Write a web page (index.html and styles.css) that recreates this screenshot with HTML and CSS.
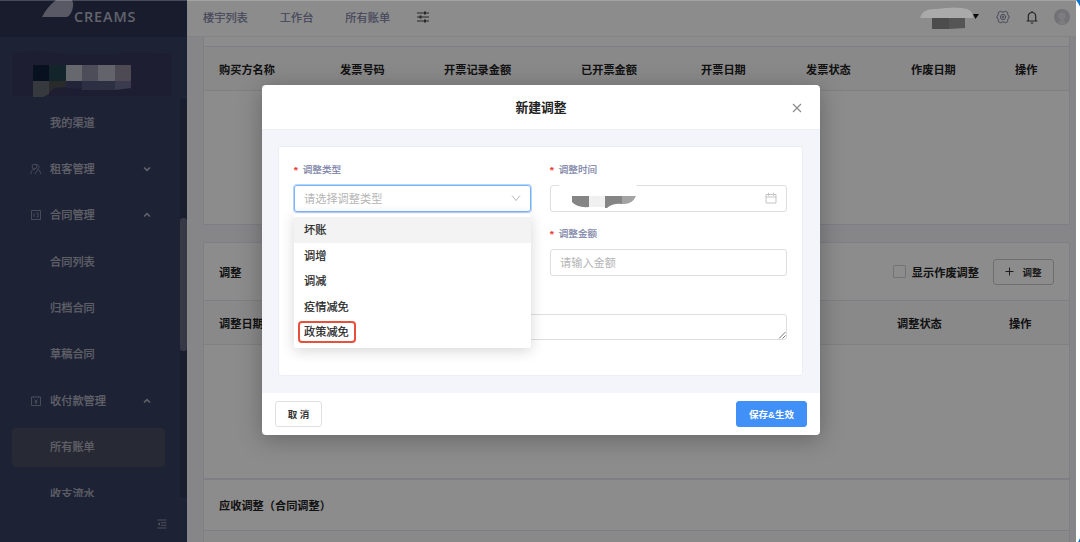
FILE: index.html
```html
<!DOCTYPE html>
<html lang="zh-CN">
<head>
  <meta charset="UTF-8">
  <title>CREAMS</title>
  <link rel="stylesheet" href="styles.css">
</head>
<body>
  <div class="app">
    <aside class="sidebar">
      <div class="brand">
        <svg class="brand-mark" width="32" height="20" viewBox="0 0 32 20"><path d="M0 17Q5 7 14 0H30Q32 3 30.500 9Q29 15 25 17Z" fill="#a0a3b6"/></svg>
        <span>CREAMS</span>
      </div>
      <div class="account">
        <svg width="162" height="52" viewBox="0 0 162 52">
          <path d="M2 5Q25 1 50 5Q92 8 110 5Q130 3 148 5H162V48H2V26Z" fill="#36385b"/>
          <path d="M23 17h16v16H23z" fill="#0e2039"/>
          <path d="M39 17h17v16H39z" fill="#25424f"/>
          <path d="M56 17h16v16H56z" fill="#bcbec8"/>
          <path d="M72 17h16v16H72z" fill="#8c8da3"/>
          <path d="M88 17h17v16H88z" fill="#b4b5c3"/>
          <path d="M105 17h16v16H105z" fill="#8d8799"/>
          <path d="M23 33h16v13l-6 3H23z" fill="#636a74"/>
          <path d="M39 33h17v6l-12 1l-5 5z" fill="#494f4c"/>
          <path d="M56 33h16v8l-16 -1z" fill="#3f426b"/>
          <path d="M72 33h33v9l-33 0z" fill="#535679"/>
          <path d="M105 33h16v7l-16 2z" fill="#6b6c8e"/>
        </svg>
      </div>
      <nav class="menu">
        <a class="menu-item">我的渠道</a>
        <a class="menu-item group">
          <svg class="menu-icon" viewBox="0 0 12 12"><circle cx="4.5" cy="3.5" r="2.4"/><path d="M1 11C1 7 3 6 5 6.500M6 1.500c3-.3 4 3 1.800 5M5 11L7.800 6.500c1.500.500 2.700 2 2.700 4.500"/></svg>
          租客管理
          <svg class="arrow" viewBox="0 0 8 6"><path d="M1 1.500L4 4.300L7 1.500"/></svg>
        </a>
        <a class="menu-item group">
          <svg class="menu-icon" viewBox="0 0 12 12"><path d="M1.500 1.500h9v9h-9zM4 4v4M6.500 4h1.500v4H6.500"/></svg>
          合同管理
          <svg class="arrow" viewBox="0 0 8 6"><path d="M1 4.500L4 1.700L7 4.500"/></svg>
        </a>
        <a class="menu-item">合同列表</a>
        <a class="menu-item">归档合同</a>
        <a class="menu-item">草稿合同</a>
        <a class="menu-item group">
          <svg class="menu-icon" viewBox="0 0 12 12"><path d="M1.500 2h9v8.500h-9zM3.500 1v1.500M8.500 1v1.500M4.500 4.500L6 6L7.500 4.500M6 6v3M4.500 7h3"/></svg>
          收付款管理
          <svg class="arrow" viewBox="0 0 8 6"><path d="M1 4.500L4 1.700L7 4.500"/></svg>
        </a>
        <a class="menu-item active">所有账单</a>
        <a class="menu-item">收支流水</a>
        <div class="scrollbar"><div class="thumb"></div></div>
      </nav>
      <div class="collapse">
        <svg width="10" height="10" viewBox="0 0 10 10"><path d="M.5 1h9M4 3.700h5.500M4 6.300h5.500M.5 9h9" stroke="#8f92a5" fill="none"/><path d="M.5 5L3 3.300v3.400z" fill="#8f92a5"/></svg>
      </div>
    </aside>

    <div class="main">
      <header class="topbar">
        <a>楼宇列表</a>
        <a>工作台</a>
        <a>所有账单</a>
        <svg class="sliders" width="12" height="12" viewBox="0 0 12 12"><path d="M0 2h12M0 6h12M0 10h12" stroke="#4a4a4e" fill="none" stroke-width="1.100"/><path d="M7 .6h2v2.800H7zM2.500 4.600h2v2.800h-2zM7 8.600h2v2.800H7z" fill="#4a4a4e"/></svg>
        <div class="tools">
          <svg class="username" width="60" height="24" viewBox="0 0 60 24"><path d="M0 13Q2 3 17 4Q36 1 47 4Q53 6 53 13Z" fill="#aaa"/><path d="M12 13h17v11H12z" fill="#4c4c4c"/><path d="M29 13h16v10l-16 1z" fill="#555"/><path d="M53 9h6l-3.500 5z" fill="#0a0a0a"/></svg>
          <svg class="gear" width="14" height="14" viewBox="0 0 14 14"><path d="M4.300 1.200L6 2h2l1.700-.8 2 1.300v2L13.300 7l-1.600 2.500v2l-2 1.300L8 12H6l-1.700.8-2-1.300v-2L.7 7l1.600-2.500v-2z"/><path d="M5.600 4.600h2.800L9.800 7 8.400 9.400H5.600L4.200 7z"/><circle cx="7" cy="7" r=".8"/></svg>
          <svg class="bell" width="12" height="14" viewBox="0 0 12 14"><path d="M.5 11h11M2.300 11V6.500C2.300 4 3.800 2.500 6 2.500S9.700 4 9.700 6.500V11M6 1v1.500M4.700 13h2.600"/></svg>
          <svg class="avatar" width="16" height="16" viewBox="0 0 16 16"><circle cx="8" cy="8" r="8" fill="#d0d0da"/><circle cx="8" cy="7" r="3.600" fill="#e4e4ea"/><path d="M6.500 9h3v3l3 1.500Q8 17 3.500 13.500l3-1.500z" fill="#e4e4ea"/></svg>
        </div>
      </header>

      <section class="card invoices">
        <div class="row head invoice-cols">
          <span>购买方名称</span><span>发票号码</span><span>开票记录金额</span><span>已开票金额</span><span>开票日期</span><span>发票状态</span><span>作废日期</span><span>操作</span>
        </div>
      </section>

      <section class="card adjusts">
        <div class="title">
          <b>调整</b>
          <label><i class="checkbox"></i>显示作废调整</label>
          <button class="btn add"><svg width="9" height="9" viewBox="0 0 9 9"><path d="M4.500 .5v8M.5 4.500h8" stroke="#333" fill="none"/></svg>调整</button>
        </div>
        <div class="row head adjust-cols">
          <span>调整日期</span><span>调整状态</span><span>操作</span>
        </div>
      </section>

      <section class="card receivable">
        <div class="title"><b>应收调整（合同调整）</b></div>
        <div class="row head"></div>
      </section>
    </div>
  </div>

  <div class="edge">
    <svg width="6" height="12" viewBox="0 0 6 12"><path d="M0 0H6V12Q4 5 0 0Z" fill="#0b74d1"/></svg>
    <svg width="6" height="12" viewBox="0 0 6 12"><path d="M6 0V12H2Q5 7 6 0Z" fill="#0b74d1"/></svg>
  </div>
  <div class="mask"></div>

  <div class="modal">
    <div class="modal-header">
      新建调整
      <svg class="close" width="10" height="10" viewBox="0 0 10 10"><path d="M1 1l8 8M9 1L1 9" stroke="#8c8c8c" stroke-width="1.200" fill="none"/></svg>
    </div>
    <div class="modal-body">
      <div class="form">
        <div class="field">
          <label class="required">调整类型</label>
          <div class="input focus">请选择调整类型
            <svg class="suffix" width="10" height="10" viewBox="0 0 10 10"><path d="M1 2.500l4 5 4-5" stroke="#b8b8b8" fill="none"/></svg>
          </div>
          <ul class="dropdown">
            <li class="hover">坏账</li>
            <li>调增</li>
            <li>调减</li>
            <li>疫情减免</li>
            <li><span class="marked">政策减免</span></li>
          </ul>
        </div>
        <div class="field">
          <label class="required">调整时间</label>
          <div class="input">
            <svg class="smear" width="82" height="26" viewBox="0 0 82 26"><path d="M0 0h74q6 2 8 5H0z" fill="#fff"/><path d="M13 12h17v11q-12 1-17-5z" fill="#858585"/><path d="M30 12h16v11H30z" fill="#f0f0f0"/><path d="M46 12h17v8q-9-1-15 4h-2z" fill="#858585"/><path d="M63 12h14q-4 9-14 8z" fill="#a3a3a3"/></svg>
            <svg class="suffix" width="12" height="12" viewBox="0 0 12 12"><path d="M1 2.500h10v8.500H1zM1 5h10M3.500 .8v3M8.500 .8v3" stroke="#c4c4c4" fill="none"/></svg>
          </div>
        </div>
        <div class="field amount">
          <label class="required">调整金额</label>
          <div class="input">请输入金额</div>
        </div>
        <div class="input remark">
          <svg class="grip" width="8" height="8" viewBox="0 0 8 8"><path d="M1 7.500L7.500 1M4.500 7.500l3-3" stroke="#777" fill="none"/></svg>
        </div>
      </div>
    </div>
    <div class="modal-footer">
      <button class="btn cancel">取 消</button>
      <button class="btn primary">保存&amp;生效</button>
    </div>
  </div>
</body>
</html>
```
FILE: styles.css
```css
* {
  box-sizing: border-box;
}

body {
  margin: 0;
  width: 1080px;
  height: 542px;
  overflow: hidden;
  position: relative;
  font-family: "Liberation Sans", "Noto Sans CJK SC", sans-serif;
  font-size: 11.2px;
  color: #222;
  background: #fff;
}

.app {
  display: flex;
  width: 1076px;
  height: 542px;
  background: #f4f5f9;
}

/* sidebar */
.sidebar {
  width: 187px;
  display: flex;
  flex-direction: column;
  background: #373e62;
  color: #b3b5c0;
}

.brand {
  flex: none;
  height: 37px;
  display: flex;
  background: #2c3352;
  padding-left: 42px;
  font-family: "Open Sans", sans-serif;
  font-size: 14.4px;
  font-weight: 600;
  letter-spacing: 0.9px;
  line-height: 33px;
  color: #b4b7c4;
}

.account {
  flex: none;
  height: 62px;
  padding: 11px 0 0 10px;
}

.account svg,
.tools svg {
  display: block;
}

.menu {
  position: relative;
  flex: none;
  height: 398px;
  overflow: hidden;
}

.menu-item {
  display: flex;
  align-items: center;
  height: 39px;
  margin: 0 22px 7.4px 12px;
  padding-left: 38px;
  border-radius: 4px;
  line-height: 20px;
  -webkit-text-stroke: 0.25px;
}

.menu-item:first-child {
  margin-top: 4px;
}

.group {
  padding-left: 18px;
}

.menu-icon {
  width: 12px;
  height: 12px;
  margin-right: 8px;
  fill: none;
  stroke: #8d91a6;
  stroke-width: 0.9;
}

.arrow {
  width: 8px;
  height: 6px;
  margin: 0 14px 0 auto;
  fill: none;
  stroke: #b3b5c0;
  stroke-width: 1.6;
}

.active {
  background: #484b5f;
}

.scrollbar {
  position: absolute;
  top: -4px;
  right: 0;
  width: 7px;
  height: 402px;
  padding-top: 123px;
  background: #303655;
}

.thumb {
  height: 133px;
  border-radius: 3px;
  background: #63677e;
}

.collapse {
  padding: 22px 0 0 157px;
}

/* top bar */
.main {
  flex: 1;
  display: flex;
  flex-direction: column;
}

.topbar {
  flex: none;
  display: flex;
  align-items: center;
  height: 37px;
  padding: 0 6px 3px 16px;
  background: #fff;
  color: #7d82a5;
  border-bottom: 1px solid #eeeff4;
  -webkit-text-stroke: 0.2px;
}

.topbar a {
  margin-right: 32px;
}

.sliders {
  margin-left: -5px;
}

.tools {
  display: flex;
  align-items: center;
  margin-left: auto;
}

/* stays above the page mask */
.username {
  position: relative;
  z-index: 1;
}

.gear,
.bell {
  fill: none;
  stroke: #8184a0;
}

.gear {
  margin-left: 16px;
}

.bell {
  margin: 0 16px 0 16px;
  stroke: #444;
  stroke-width: 1.2;
}

/* cards */
.card {
  flex: none;
  margin: 0 6px 0 16px;
  background: #fff;
  border: 1px solid #e6e8f0;
}

.invoices {
  height: 188px;
  padding-top: 9px;
  border-top: 0;
}

.adjusts {
  height: 237px;
  margin-top: 17px;
}

.receivable {
  height: 63px;
  overflow: hidden;
  border-bottom: 0;
}

.row {
  display: grid;
  align-items: center;
  height: 45px;
  padding-left: 15px;
  white-space: nowrap;
  font-weight: bold;
  background: #f9f9fa;
  border-top: 1px solid #e6e8f0;
  border-bottom: 1px solid #e9eaef;
}

.invoice-cols {
  grid-template-columns: 121px 104px 137px 120px 105px 105px 104px 1fr;
}

.adjust-cols {
  grid-template-columns: 678px 112px 1fr;
}

.title {
  display: flex;
  align-items: center;
  height: 57px;
  padding: 0 15px;
}

.receivable .title {
  height: 50px;
}

.title label {
  display: flex;
  align-items: center;
  margin-left: auto;
  font-weight: bold;
}

.checkbox {
  width: 13px;
  height: 13px;
  margin-right: 6px;
  border: 1px solid #d2d2d6;
  border-radius: 1px;
}

.btn {
  height: 26px;
  border: 1px solid #dfdfe2;
  border-radius: 3px;
  background: #fff;
  color: #333;
  font: bold 9.5px "Liberation Sans", "Noto Sans CJK SC", sans-serif;
}

.add {
  display: flex;
  align-items: center;
  justify-content: center;
  width: 61px;
  margin-left: 14px;
  gap: 8px;
  border-color: #c8c9cf;
}

/* strip of the desktop beside the window */
.edge {
  position: absolute;
  top: 0;
  right: 0;
  width: 4px;
  height: 542px;
  display: flex;
  flex-direction: column;
  justify-content: space-between;
}

.mask {
  position: absolute;
  top: 0;
  left: 0;
  width: 1076px;
  height: 542px;
  background: rgba(0, 0, 0, 0.45);
  border-top: 1px solid rgba(255, 255, 255, 0.2);
}

/* dialog */
.modal {
  position: absolute;
  top: 85px;
  left: 262px;
  width: 558px;
  height: 350px;
  display: flex;
  flex-direction: column;
  border-radius: 4px;
  background: #fff;
  box-shadow: 0 4px 24px rgba(0, 0, 0, 0.28);
}

.modal-header {
  display: flex;
  align-items: center;
  justify-content: center;
  position: relative;
  height: 44px;
  padding-bottom: 1px;
  font-size: 12.8px;
  font-weight: bold;
}

.close {
  position: absolute;
  right: 18px;
  top: 18px;
}

.modal-body {
  height: 264px;
  padding: 16px 17px 18px 16px;
  background: #f4f5fa;
  border-top: 1px solid #eff0f5;
}

.form {
  display: grid;
  grid-template-columns: 237px 237px;
  column-gap: 19px;
  grid-template-rows: 64px 64px 49px;
  height: 230px;
  padding: 16px 15px;
  border: 1px solid #eceef4;
  border-radius: 3px;
  background: #fff;
}

.field {
  position: relative;
}

.required {
  display: block;
  height: 22px;
  font-size: 9.6px;
  line-height: 14px;
  color: #7b82a6;
  -webkit-text-stroke: 0.2px;
}

.required::before {
  content: "*";
  margin-right: 5px;
  color: #f04134;
  font-weight: bold;
}

.input {
  position: relative;
  display: flex;
  align-items: center;
  height: 27px;
  padding: 0 0 2px 9px;
  border: 1px solid #dedede;
  border-radius: 3px;
  color: #b5b5b5;
}

.focus {
  border-color: #7db4f5;
  box-shadow: 0 0 0 1px #b7d5fa;
}

.suffix {
  margin: 0 9px 0 auto;
}

.smear {
  position: absolute;
  left: 8px;
  top: -2px;
}

.amount {
  grid-column: 2;
}

.remark {
  grid-column: 1 / 3;
  margin-top: 23px;
  height: 26px;
}

.grip {
  position: absolute;
  right: 0;
  bottom: 0;
}

.dropdown {
  position: absolute;
  top: 51px;
  left: 0;
  z-index: 2;
  width: 237px;
  height: 134px;
  margin: 0;
  padding: 3px 0;
  list-style: none;
  background: #fff;
  border-radius: 2px;
  box-shadow: 0 3px 14px rgba(0, 0, 0, 0.16);
  -webkit-text-stroke: 0.2px;
}

.dropdown li {
  height: 25.6px;
  padding-left: 10px;
  line-height: 26px;
}

.dropdown .hover {
  background: #f3f3f3;
}

.marked {
  display: inline-block;
  height: 22px;
  margin-left: -6px;
  padding: 0 5px 0 4px;
  border: 2px solid #e8503c;
  border-radius: 4px;
  line-height: 18px;
}

.modal-footer {
  display: flex;
  justify-content: space-between;
  padding: 8px 13px;
}

.cancel {
  width: 47px;
}

.primary {
  width: 71px;
  border-color: #4090f7;
  background: #4090f7;
  color: #fff;
}
```
